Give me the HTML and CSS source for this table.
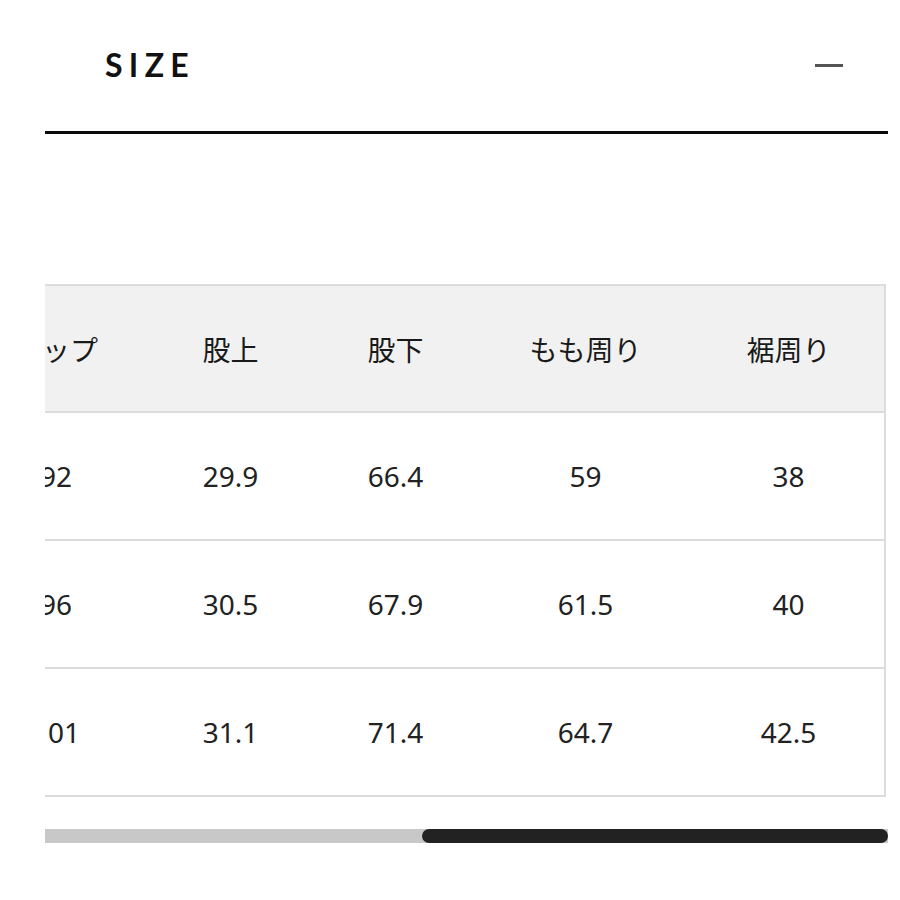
FILE: index.html
```html
<!DOCTYPE html>
<html lang="ja">
<head>
<meta charset="utf-8">
<title>SIZE</title>
<link rel="stylesheet" href="styles.css">
</head>
<body>
<section class="panel">
  <header class="panel-head">
    <h2 class="panel-title">SIZE</h2>
    <span class="toggle" aria-label="閉じる"></span>
  </header>
  <div class="table-viewport">
    <table class="size-table">
      <thead>
        <tr>
          <th class="c-size">サイズ</th>
          <th class="c-a">総丈</th>
          <th class="c-b">ウエスト</th>
          <th class="c-hip">ヒップ</th>
          <th class="c-rise">股上</th>
          <th class="c-inseam">股下</th>
          <th class="c-thigh">もも周り</th>
          <th class="c-hem">裾周り</th>
        </tr>
      </thead>
      <tbody>
        <tr><td>S</td><td>98</td><td>70</td><td>92</td><td>29.9</td><td>66.4</td><td>59</td><td>38</td></tr>
        <tr><td>M</td><td>100</td><td>74</td><td>96</td><td>30.5</td><td>67.9</td><td>61.5</td><td>40</td></tr>
        <tr><td>L</td><td>103</td><td>78</td><td>101</td><td>31.1</td><td>71.4</td><td>64.7</td><td>42.5</td></tr>
      </tbody>
    </table>
  </div>
  <div class="scrollbar"><div class="thumb"></div></div>
</section>
</body>
</html>
```
FILE: styles.css
```css
html, body {
  margin: 0;
  padding: 0;
  background: #fff;
}
body {
  font-family: "Noto Sans", "Noto Sans CJK JP", sans-serif;
  color: #1c1c1c;
}
.panel {
  padding: 0 12px 0 45px;
}
.panel-head {
  height: 134px;
  border-bottom: 3px solid #0a0a0a;
  display: flex;
  align-items: center;
  justify-content: space-between;
  padding: 0 45px 3px 60px;
  box-sizing: border-box;
}
.panel-title {
  margin: 0;
  font-family: "Lato", "Noto Sans", sans-serif;
  font-weight: 700;
  font-size: 32px;
  letter-spacing: 6.3px;
  color: #111;
}
.toggle {
  display: block;
  width: 28px;
  height: 3px;
  background: #555;
  margin-top: 2px;
}
.table-viewport {
  margin-top: 150px;
  overflow: hidden;
  direction: rtl;
  padding-right: 2px;
}
.size-table {
  direction: ltr;
  border-collapse: collapse;
  table-layout: fixed;
  width: 1521px;
  border: 2px solid #dcdcdc;
  font-size: 28px;
}
.size-table th,
.size-table td {
  text-align: center;
  vertical-align: middle;
  padding: 0;
  white-space: nowrap;
}
.size-table th {
  background: #f1f1f1;
  font-weight: 400;
  height: 125px;
  font-family: "Noto Sans CJK JP", sans-serif;
  font-size: 28px;
  color: #1a1a1a;
}
.size-table td {
  height: 126px;
  border-top: 2px solid #dcdcdc;
  color: #222;
}
.c-size { width: 201px; }
.c-a { width: 201px; }
.c-b { width: 199px; }
.c-hip { width: 184px; }
.c-rise { width: 165px; }
.c-inseam { width: 165px; }
.c-thigh { width: 215px; }
.c-hem { width: 191px; }
.scrollbar {
  margin-top: 32px;
  height: 14px;
  background: #c8c8c8;
  display: flex;
  justify-content: flex-end;
}
.thumb {
  width: 466px;
  height: 14px;
  background: #222;
  border-radius: 7px;
}
```
